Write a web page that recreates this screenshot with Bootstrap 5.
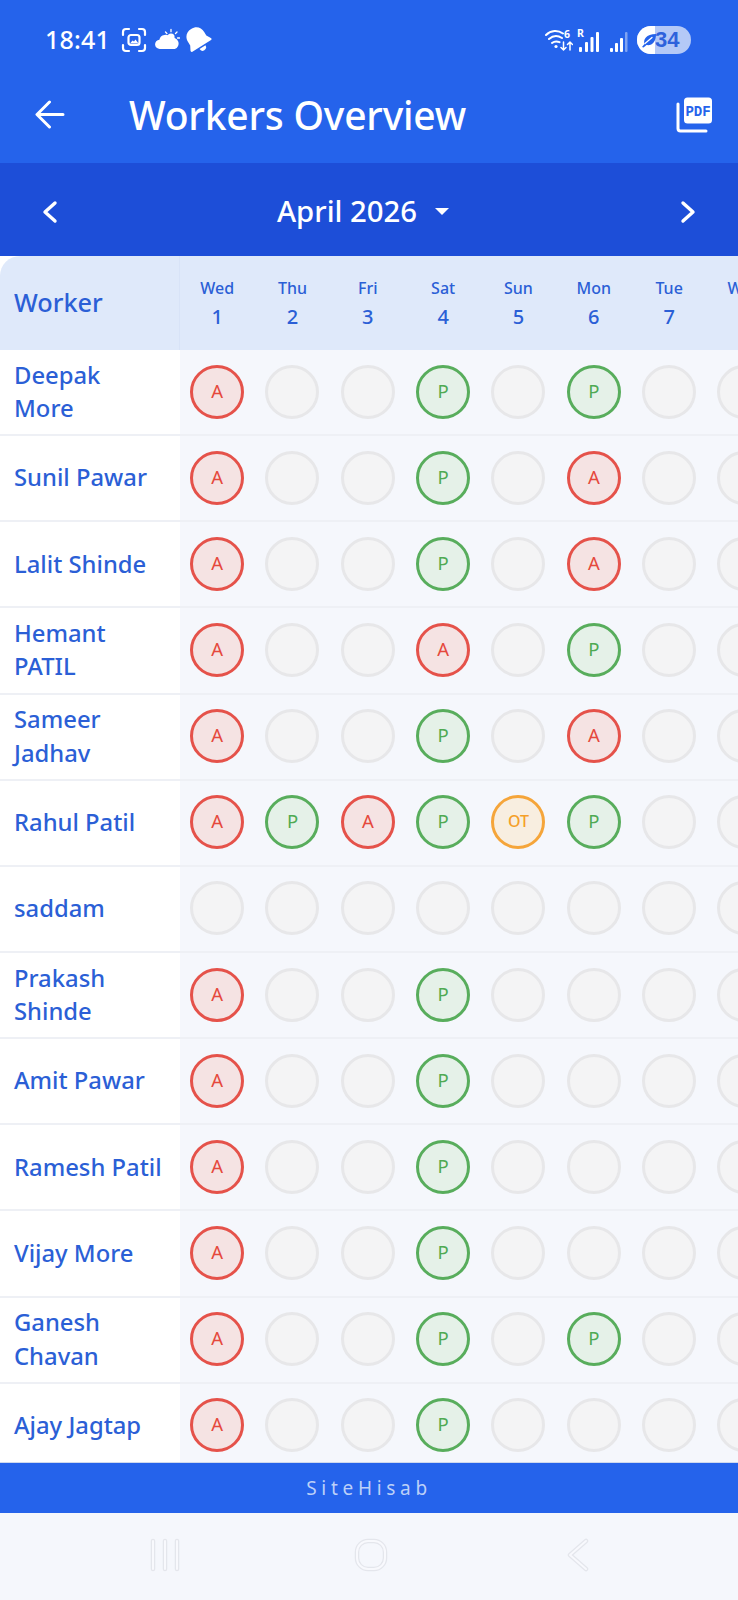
<!DOCTYPE html>
<html lang="en">
<head>
  <meta charset="UTF-8">
  <title>Workers Overview</title>
  <link href="https://cdn.jsdelivr.net/npm/bootstrap@5.3.3/dist/css/bootstrap.min.css" rel="stylesheet">
  <style>
    html, body { height: 1600px; overflow: hidden; }
    body { font-family: "Noto Sans", sans-serif; background: #f5f7fc; }
    .app-top { background: #2563eb; height: 163px; color: #fff; }
    .status-row { height: 80px; padding: 0 47px 0 45px; }
    .clock { font-weight: 500; font-size: 25px; letter-spacing: .2px; margin-right: 11px; }
    .batt-pill { width: 54px; height: 28px; border-radius: 14px; overflow: hidden; background: #b4c9f7; }
    .batt-fill { width: 18px; height: 28px; background: #fff; }
    .batt-leaf { left: 3px; top: 5px; }
    .batt-num { left: 18px; top: -2px; font-family: "Liberation Sans", sans-serif; font-weight: 700; font-size: 22px; line-height: 32px; color: #2e62dc; }
    .title-row { height: 83px; padding: 0 25px 14px 35px; }
    .page-title { font-size: 39px; font-weight: 500; margin: 0 0 0 64px; line-height: 1; letter-spacing: -.2px; }
    .month-bar { background: #1d4ed8; height: 93px; color: #fff; padding: 4px 42px 0 42px; }
    .month-pick { margin-right: 12px; }
    .month-name { font-size: 29.3px; font-weight: 500; }
    .caret-down { width: 0; height: 0; border-left: 7.5px solid transparent; border-right: 7.5px solid transparent; border-top: 7px solid #fff; margin-left: 18px; }
    .sheet { height: 1207px; overflow: hidden; background: #fff; border-bottom: 1px solid #cfd9ee; }
    .head-row { height: 94px; background: #dfe9fa; border-top-left-radius: 20px; }
    .name-head { width: 179.5px; flex: none; padding-left: 14px; font-size: 25.3px; font-weight: 500; color: #2b5fd6; border-right: 1px solid #d8e3f7; }
    .day-head { width: 75.33px; flex: none; text-align: center; color: #2b5fd6; }
    .day-head div:first-child { font-size: 16px; font-weight: 500; line-height: 22px; margin-bottom: 6px; }
    .day-head div:last-child { font-size: 20px; font-weight: 500; line-height: 24px; }
    .worker-row { height: 86.15px; border-bottom: 2px solid #eef0f5; }
    .name-cell { width: 179.5px; flex: none; padding-left: 14px; font-size: 23.8px; font-weight: 500; line-height: 33.5px; color: #2b5fd6; background: #fff; }
    .day-cells { background: #f5f7fc; flex: none; padding-bottom: 1px; }
    .day-cell { width: 75.33px; flex: none; }
    .dot { width: 54px; height: 54px; border-radius: 50%; border: 3px solid #e7e7e9; background: #f4f4f5; font-size: 18.5px; padding-bottom: 2px; }
    .dot-a { border-color: #e5524a; background: #f5e3e3; color: #e5493d; }
    .dot-p { border-color: #58ad5c; background: #e5f1e8; color: #4faa53; }
    .dot-ot { border-color: #f5a53a; background: #f8eee0; color: #f59f28; font-size: 16px; font-weight: 500; }
    .brand-bar { height: 50px; background: #2563eb; color: #bcd0f8; font-size: 19px; letter-spacing: 4.7px; }
    .nav-keys { height: 86px; background: #f5f7fc; padding-bottom: 2px; }
    .key-edge { stroke: #e4e6ec; stroke-width: 4.5; fill: none; stroke-linecap: round; stroke-linejoin: round; }
    .key-core { stroke: #f8f9fd; stroke-width: 2; fill: none; stroke-linecap: round; stroke-linejoin: round; }
    .key-home { margin-left: 173px; }
    .key-back { margin-left: 178px; }
  </style>
</head>
<body>
  <div class="app-top">
    <div class="status-row d-flex align-items-center">
      <span class="clock">18:41</span>
      <!-- screenshot icon -->
      <svg width="26" height="26" viewBox="0 0 26 26" fill="none" stroke="#fff" stroke-width="2.2" stroke-linecap="round">
        <path d="M2 8V5a3 3 0 0 1 3-3h3M18 2h3a3 3 0 0 1 3 3v3M24 18v3a3 3 0 0 1-3 3h-3M8 24H5a3 3 0 0 1-3-3v-3"/>
        <rect x="7.500" y="8" width="11" height="10" rx="2.500"/>
        <path d="M9 16.500l2.500-3 1.500 1 1.500-2 3 4z" fill="#fff" stroke="none"/>
      </svg>
      <!-- weather -->
      <svg class="ms-2" width="25" height="24" viewBox="0 0 25 24">
        <path d="M5 21a4.600 4.600 0 0 1-.6-9.200A6 6 0 0 1 15.600 10a5.200 5.200 0 0 1 4.200 11z" fill="#fff"/>
        <circle cx="16" cy="9" r="3.600" fill="#fff"/>
        <path d="M16 1.500v2.200M22 4l-1.500 1.500M24.500 10h-2M10.500 4l1.400 1.500" stroke="#fff" stroke-width="1.300" stroke-linecap="round"/>
      </svg>
      <!-- bell -->
      <svg class="ms-1" width="28" height="28" viewBox="0 0 28 28">
        <g transform="rotate(-32 14 14)" fill="#fff">
          <path d="M14 1c-6 0-9.500 4-9.500 9.500v4L2 19c-.5 1 0 2 1 2h22c1 0 1.500-1 1-2l-2.500-4.500v-4C23.500 5 20 1 14 1z"/>
          <path d="M10.500 22.500h7a3.500 3.500 0 0 1-7 0z"/>
        </g>
      </svg>
      <div class="ms-auto d-flex align-items-center">
        <!-- wifi -->
        <svg width="28" height="26" viewBox="0 0 28 26" fill="none" stroke="#fff" stroke-linecap="round">
          <path d="M1 8c5-5 12-5 17-1.500M4 12c4-3.500 9-3.500 13-1M7 16c2.500-2 5-2 7.500-.8" stroke-width="2"/>
          <circle cx="11" cy="19.500" r="1.600" fill="#fff" stroke="none"/>
          <text x="19" y="11" font-size="10.500" font-weight="700" fill="#fff" stroke="none" font-family="Noto Sans">6</text>
          <path d="M18.500 15v8M16 20.500l2.500 2.500 2.500-2.500M25 23v-8M22.500 17.500l2.500-2.500 2.500 2.500" stroke-width="1.500"/>
        </svg>
        <!-- sim 1 -->
        <svg class="ms-1" width="24" height="26" viewBox="0 0 24 26" fill="#fff">
          <text x="0" y="10" font-size="10.500" font-weight="700" font-family="Noto Sans">R</text>
          <rect x="2" y="20" width="3" height="5" rx="1"/><rect x="8" y="15" width="3" height="10" rx="1"/><rect x="13.500" y="10" width="3" height="15" rx="1"/><rect x="19" y="5" width="3" height="20" rx="1"/>
        </svg>
        <!-- sim 2 -->
        <svg class="ms-2" width="20" height="26" viewBox="0 0 20 26" fill="#fff">
          <rect x="1" y="21" width="3" height="4" rx="1"/><rect x="6" y="16" width="3" height="9" rx="1"/><rect x="11" y="11" width="3" height="14" rx="1"/><rect x="16" y="5" width="2.500" height="20" rx="1" fill="#7fa3f2"/>
        </svg>
        <!-- battery -->
        <div class="batt-pill position-relative ms-2">
          <div class="batt-fill"></div>
          <svg class="batt-leaf position-absolute" width="18" height="18" viewBox="0 0 18 18">
            <path d="M2 16c1-1 1.500-2 2.500-3C3 9 6 3 16 3c0 8-4 12-9.500 11-1 .8-1.800 1.500-3 2.500z" fill="#2563eb"/>
            <path d="M5 12.500 12 6.500" stroke="#fff" stroke-width="1.300" stroke-linecap="round"/>
          </svg>
          <span class="batt-num position-absolute">34</span>
        </div>
      </div>
    </div>
    <div class="title-row d-flex align-items-center">
      <svg width="30" height="29" viewBox="0 0 30 29" fill="none" stroke="#fff" stroke-width="3" stroke-linecap="round" stroke-linejoin="round"><path d="M28 14.500H3M14.500 2 2 14.500 14.500 27"/></svg>
      <h1 class="page-title">Workers Overview</h1>
      <svg class="ms-auto" width="37" height="36" viewBox="0 0 37 36">
        <rect x="8" y="0.500" width="28" height="26" rx="3.500" fill="#fff"/>
        <path d="M2 7v24.500a2.500 2.500 0 0 0 2.500 2.500H30" fill="none" stroke="#fff" stroke-width="3" stroke-linecap="round"/>
        <text x="22" y="18.500" text-anchor="middle" font-size="14" font-weight="700" fill="#2563eb" font-family="Liberation Mono">PDF</text>
      </svg>
    </div>
  </div>

  <div class="month-bar d-flex align-items-center justify-content-between">
    <svg width="16" height="24" viewBox="0 0 16 24" fill="none" stroke="#fff" stroke-width="3.400" stroke-linecap="round" stroke-linejoin="round"><path d="M13 3 3 12l10 9"/></svg>
    <div class="month-pick d-flex align-items-center">
      <span class="month-name">April 2026</span>
      <span class="caret-down"></span>
    </div>
    <svg width="16" height="24" viewBox="0 0 16 24" fill="none" stroke="#fff" stroke-width="3.400" stroke-linecap="round" stroke-linejoin="round"><path d="m3 3 10 9-10 9"/></svg>
  </div>

  <div class="sheet" id="sheet"></div>

  <div class="brand-bar d-flex align-items-center justify-content-center">SiteHisab</div>

  <div class="nav-keys d-flex align-items-center justify-content-center">
    <svg width="32" height="34" viewBox="0 0 32 34"><path class="key-edge" d="M4 3v28M16 3v28M28 3v28"/><path class="key-core" d="M4 3v28M16 3v28M28 3v28"/></svg>
    <svg class="key-home" width="34" height="34" viewBox="0 0 34 34"><rect class="key-edge" x="3" y="3" width="28" height="28" rx="11"/><rect class="key-core" x="3" y="3" width="28" height="28" rx="11"/></svg>
    <svg class="key-back" width="24" height="34" viewBox="0 0 24 34"><path class="key-edge" d="M20 3 4 17l16 14"/><path class="key-core" d="M20 3 4 17l16 14"/></svg>
  </div>

  <script>
    var days = [['Wed',1],['Thu',2],['Fri',3],['Sat',4],['Sun',5],['Mon',6],['Tue',7],['Wed',8]];
    var workers = [
      ['Deepak<br>More',   'A..P.P'],
      ['Sunil Pawar',      'A..P.A'],
      ['Lalit Shinde',     'A..P.A'],
      ['Hemant<br>PATIL',  'A..A.P'],
      ['Sameer<br>Jadhav', 'A..P.A'],
      ['Rahul Patil',      'APAPOP'],
      ['saddam',           '......'],
      ['Prakash<br>Shinde','A..P..'],
      ['Amit Pawar',       'A..P..'],
      ['Ramesh Patil',     'A..P..'],
      ['Vijay More',       'A..P..'],
      ['Ganesh<br>Chavan', 'A..P.P'],
      ['Ajay Jagtap',      'A..P..']
    ];
    var html = '<div class="head-row d-flex align-items-center"><div class="name-head h-100 d-flex align-items-center">Worker</div><div class="d-flex">';
    days.forEach(function (d) {
      html += '<div class="day-head"><div>' + d[0] + '</div><div>' + d[1] + '</div></div>';
    });
    html += '</div></div>';
    workers.forEach(function (w) {
      html += '<div class="worker-row d-flex"><div class="name-cell d-flex align-items-center">' + w[0] + '</div><div class="day-cells d-flex align-items-center">';
      for (var i = 0; i < days.length; i++) {
        var s = w[1][i] || '.';
        var cls = s == 'A' ? ' dot-a' : s == 'P' ? ' dot-p' : s == 'O' ? ' dot-ot' : '';
        var txt = s == 'O' ? 'OT' : s == '.' ? '' : s;
        html += '<div class="day-cell d-flex justify-content-center"><div class="dot d-flex align-items-center justify-content-center' + cls + '">' + txt + '</div></div>';
      }
      html += '</div></div>';
    });
    document.getElementById('sheet').innerHTML = html;
  </script>
  <script src="https://cdn.jsdelivr.net/npm/bootstrap@5.3.3/dist/js/bootstrap.bundle.min.js"></script>
</body>
</html>
